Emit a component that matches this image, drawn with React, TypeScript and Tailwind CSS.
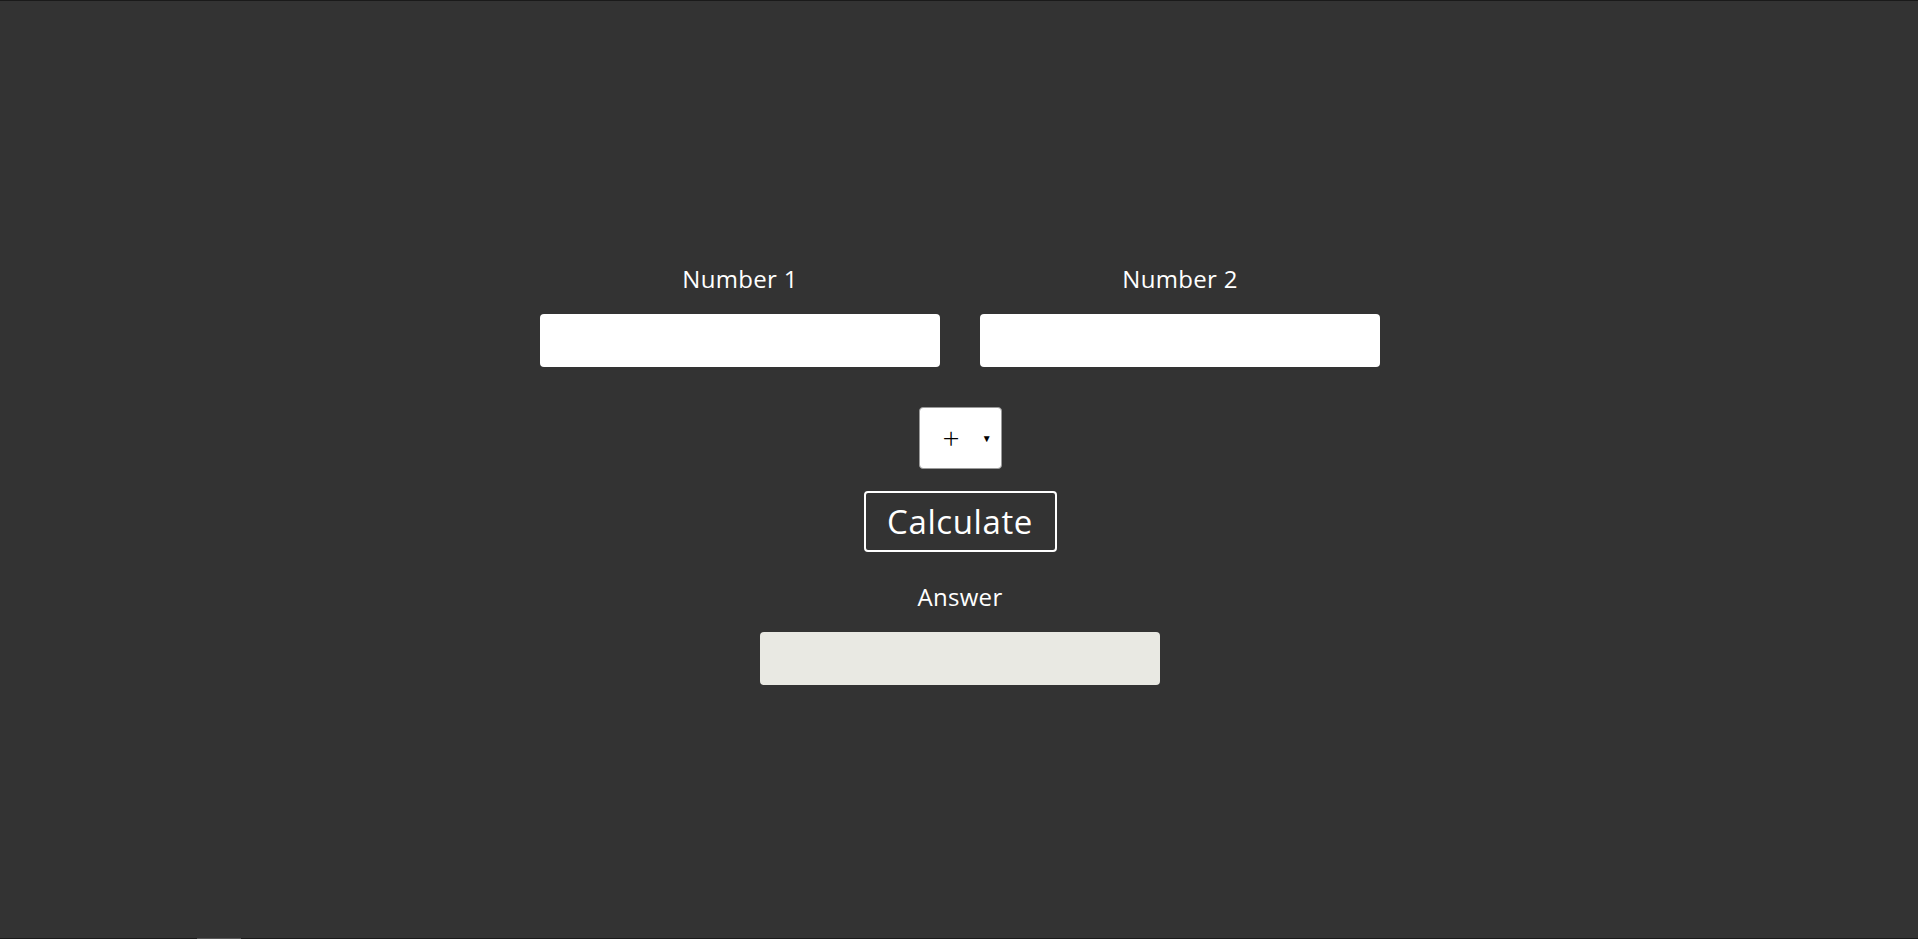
import React from "react";

export default function App() {
  const font = { fontFamily: '"Open Sans", "Liberation Sans", sans-serif' };
  return (
    <div
      className="h-[939px] w-full bg-[#333333] flex flex-col text-white overflow-hidden"
      style={font}
    >
      <div className="h-px w-full bg-[#1a1a1a]" />
      <div className="flex-1 flex flex-col items-center pt-[262px] pl-[2px]">
        <div className="flex gap-[40px]">
          {["Number 1", "Number 2"].map((l) => (
            <div key={l} className="w-[400px] flex flex-col items-center">
              <label className="text-[24px] leading-[32px] tracking-[0.3px] text-white">{l}</label>
              <input
                type="text"
                className="mt-[19px] w-[400px] h-[53px] rounded-[4px] bg-white border-0 outline-none"
              />
            </div>
          ))}
        </div>
        <div className="mt-[40px] w-[83px] h-[62px] rounded-[4px] bg-white border border-[#9a9a9a] flex items-center text-black">
          <span className="ml-[23px] text-[30px] leading-none font-light">+</span>
          <span className="ml-[22px] text-[10px] leading-none">▼</span>
        </div>
        <button className="mt-[22px] w-[193px] h-[61px] rounded-[4px] border-2 border-white text-white text-[33px] tracking-[0.6px] leading-none flex items-center justify-center">
          Calculate
        </button>
        <div className="mt-[29px] text-[24px] leading-[32px] tracking-[0.3px] text-white">Answer</div>
        <div className="mt-[19px] w-[400px] h-[53px] rounded-[4px] bg-[#e9e9e3]" />
      </div>
      <div className="h-px w-full bg-[#1a1a1a] flex">
        <div className="ml-[197px] w-[44px] h-px bg-[#555555]" />
      </div>
    </div>
  );
}
